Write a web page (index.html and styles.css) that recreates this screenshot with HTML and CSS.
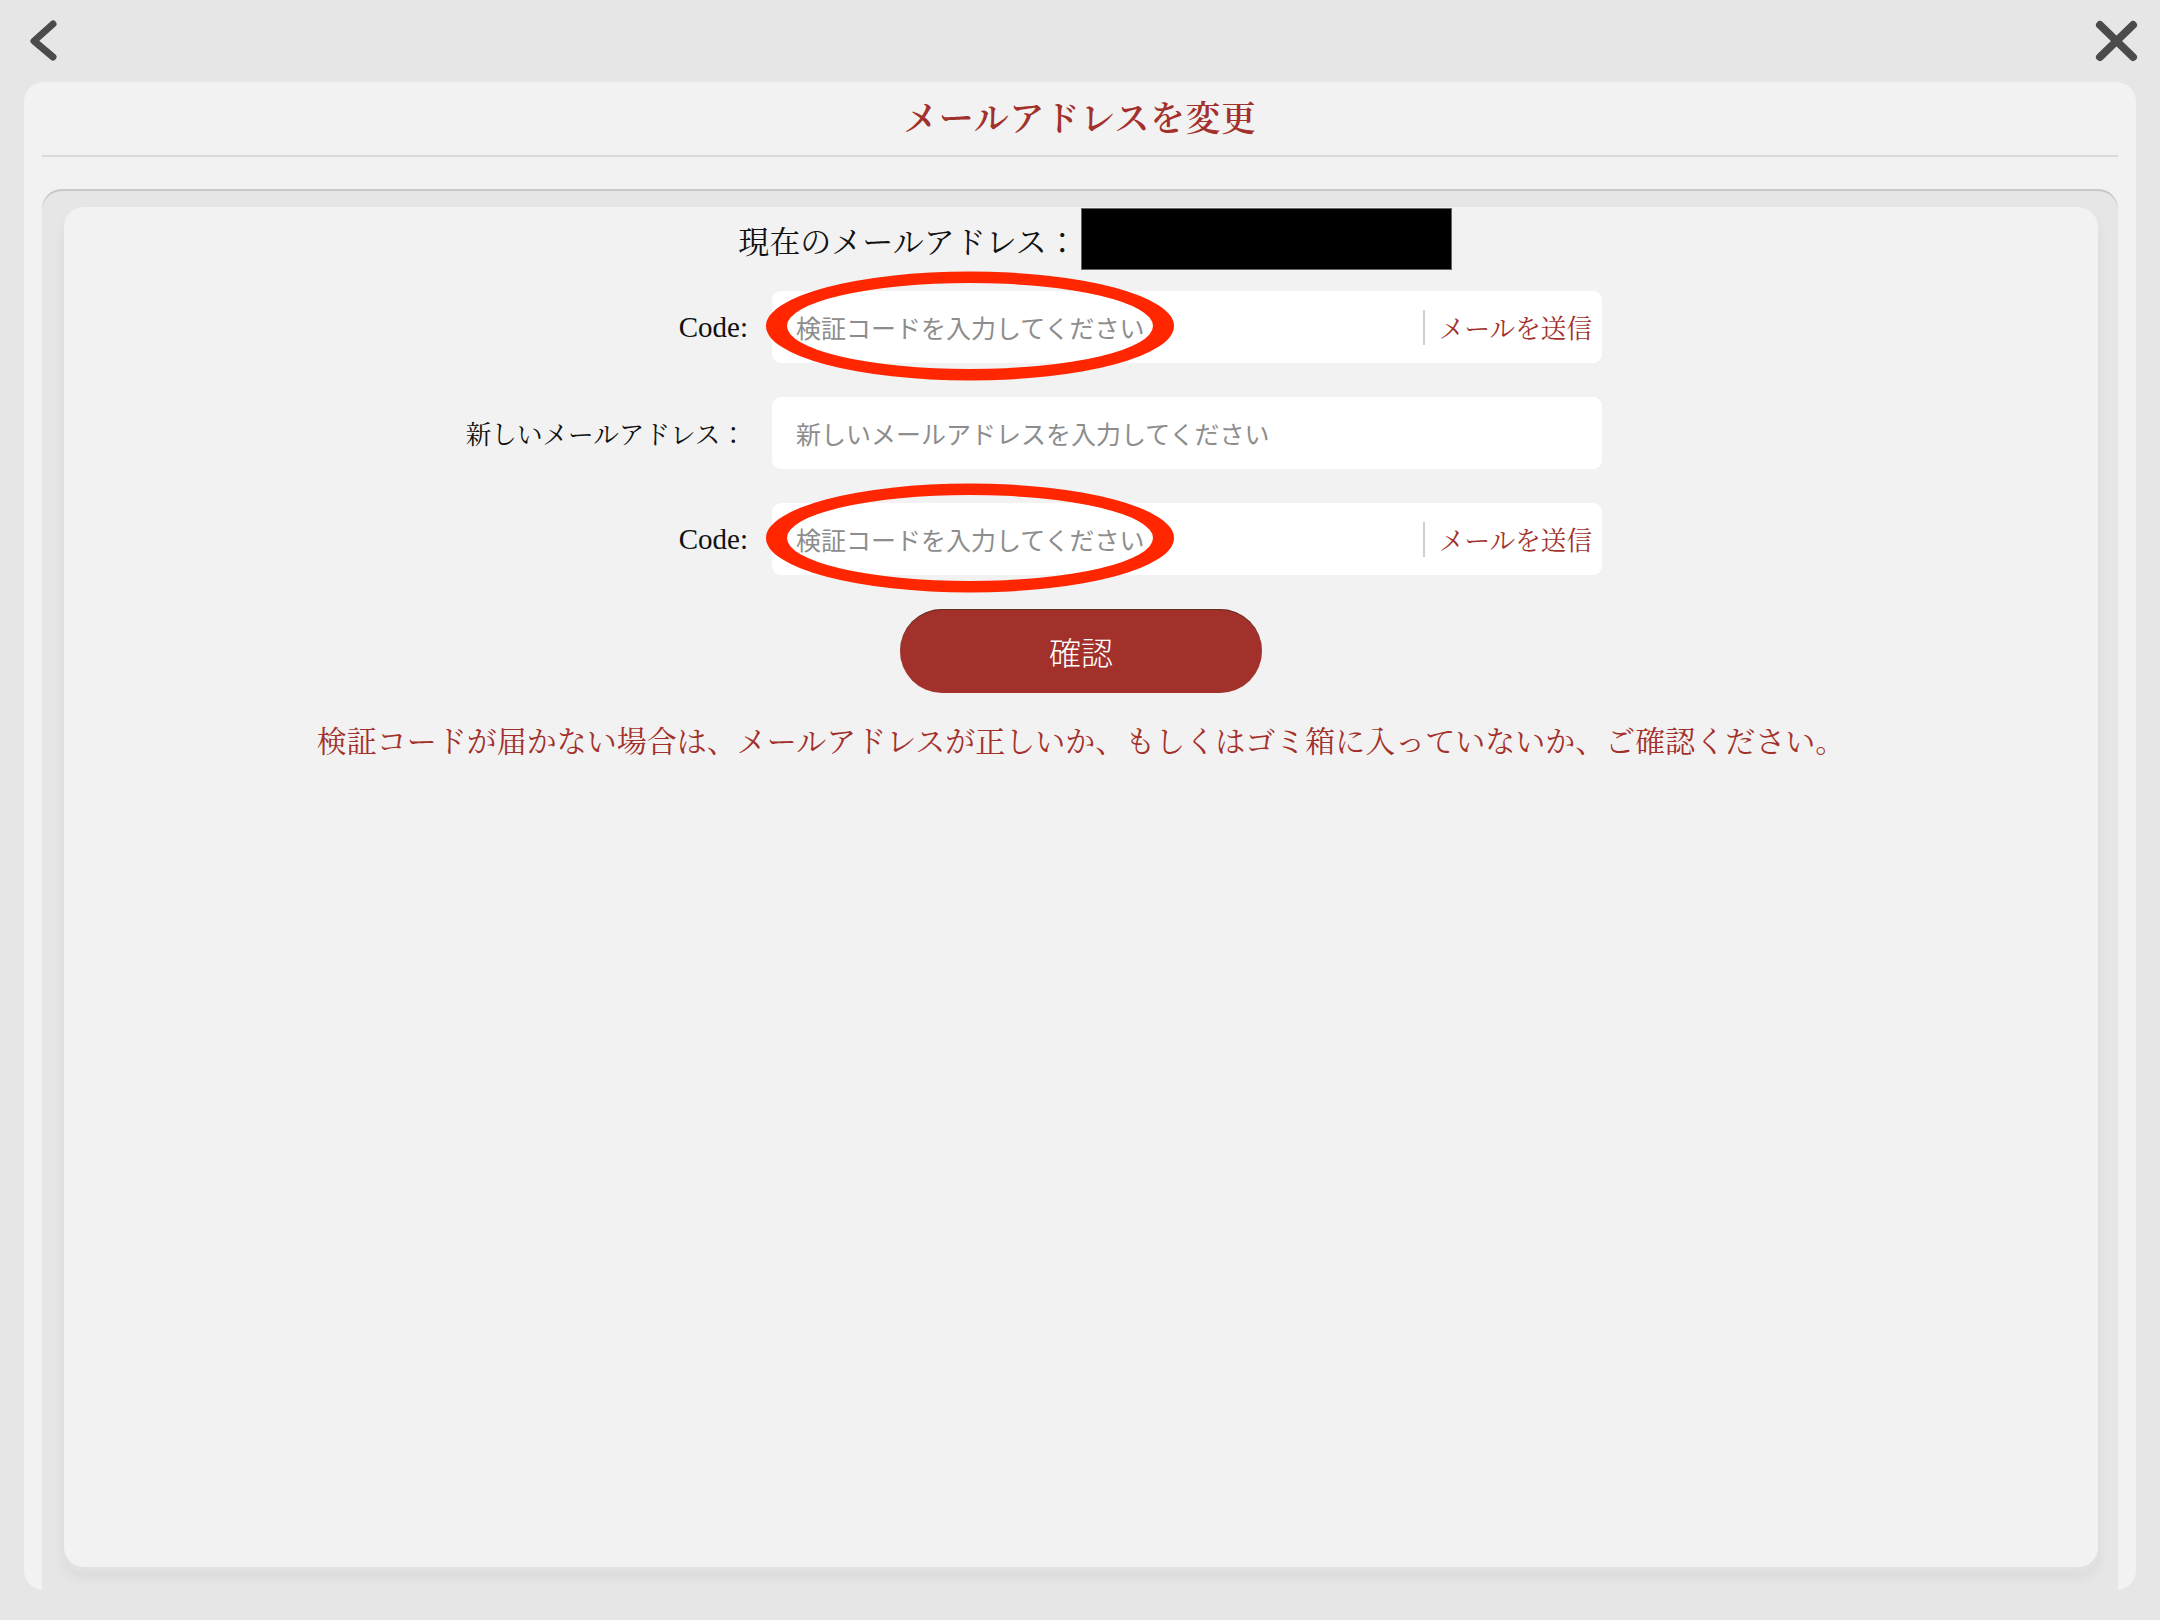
FILE: index.html
```html
<!DOCTYPE html>
<html lang="ja">
<head>
<meta charset="utf-8">
<title>メールアドレスを変更</title>
<link rel="stylesheet" href="styles.css">
</head>
<body>
<div class="page">
  <header class="topbar">
    <button class="icon-btn" aria-label="戻る">
      <svg class="icon-back" viewBox="0 0 32 44" width="32" height="44"><path d="M25 6 L6 23 L25 39"/></svg>
    </button>
    <button class="icon-btn" aria-label="閉じる">
      <svg class="icon-close" viewBox="0 0 48 44" width="48" height="44"><path d="M8 7 L41 39 M41 7 L8 39"/></svg>
    </button>
  </header>

  <main class="panel">
    <div class="panel-head">
      <h1 class="panel-title">メールアドレスを変更</h1>
    </div>

    <section class="frame">
      <div class="card">
        <div class="current">
          <span class="current-label">現在のメールアドレス：</span>
          <span class="current-value"></span>
        </div>

        <div class="form">
          <label class="form-label label-code">Code:</label>
          <div class="field">
            <input class="field-input" type="text" placeholder="検証コードを入力してください">
            <span class="field-sep"></span>
            <button class="send-btn">メールを送信</button>
            <svg class="mark" viewBox="0 0 410 112" width="410" height="112"><path fill-rule="evenodd" d="M1 56 a204 54.5 0 1 0 408 0 a204 54.5 0 1 0 -408 0 Z M22 56 a183 43 0 1 0 366 0 a183 43 0 1 0 -366 0 Z"/></svg>
          </div>

          <label class="form-label label-jp">新しいメールアドレス：</label>
          <div class="field">
            <input class="field-input" type="text" placeholder="新しいメールアドレスを入力してください">
          </div>

          <label class="form-label label-code">Code:</label>
          <div class="field">
            <input class="field-input" type="text" placeholder="検証コードを入力してください">
            <span class="field-sep"></span>
            <button class="send-btn">メールを送信</button>
            <svg class="mark" viewBox="0 0 410 112" width="410" height="112"><path fill-rule="evenodd" d="M1 56 a204 54.5 0 1 0 408 0 a204 54.5 0 1 0 -408 0 Z M22 56 a183 43 0 1 0 366 0 a183 43 0 1 0 -366 0 Z"/></svg>
          </div>
        </div>

        <button class="confirm">確認</button>

        <p class="note">検証コードが届かない場合は、メールアドレスが正しいか、もしくはゴミ箱に入っていないか、ご確認ください。</p>
      </div>
    </section>
  </main>
</div>
</body>
</html>
```

FILE: styles.css
```css
:root {
  --serif: "Liberation Serif", "Noto Serif CJK JP", "Noto Sans CJK JP", serif;
  --sans: "Noto Sans CJK JP", "Noto Sans", sans-serif;
  --brand: #a3312b;
  --bg: #e6e6e6;
  --surface: #f2f2f2;
}

* { box-sizing: border-box; }

html, body {
  margin: 0;
  padding: 0;
  background: var(--bg);
}

.page {
  width: 2160px;
  height: 1620px;
  display: flex;
  flex-direction: column;
}

/* top navigation icons */
.topbar {
  height: 82px;
  flex: none;
  display: flex;
  justify-content: space-between;
  align-items: flex-start;
  padding: 18px 20px 0 28px;
}

.icon-btn {
  border: 0;
  padding: 0;
  margin: 0;
  background: none;
  display: block;
  line-height: 0;
}

.icon-btn svg path {
  fill: none;
  stroke: #4b4b4b;
  stroke-linecap: round;
  stroke-linejoin: round;
}

.icon-back path { stroke-width: 7; }
.icon-close path { stroke-width: 8; }

/* main sheet */
.panel {
  height: 1508px;
  margin: 0 24px;
  padding: 0 18px;
  background: var(--surface);
  border-radius: 20px;
  display: flex;
  flex-direction: column;
}

.panel-head {
  height: 75px;
  flex: none;
  border-bottom: 2px solid #d9d9d9;
  display: flex;
  align-items: center;
  justify-content: center;
  padding-bottom: 6px;
}

.panel-title {
  margin: 0;
  font-family: var(--serif);
  font-weight: 600;
  font-size: 35px;
  letter-spacing: 0.5px;
  color: var(--brand);
}

.frame {
  flex: 1;
  margin-top: 32px;
  padding: 18px 20px 23px 22px;
  background: var(--bg);
  border-radius: 20px 20px 0 0;
  box-shadow: inset 0 2px 0 #c8c8c8;
  display: flex;
}

.card {
  flex: 1;
  background: var(--surface);
  border-radius: 20px;
  box-shadow: 0 6px 0 #e1e1e1, 0 10px 14px rgba(0, 0, 0, 0.06);
  display: flex;
  flex-direction: column;
}

/* current address */
.current {
  margin-top: 1px;
  height: 62px;
  display: flex;
  align-items: center;
  justify-content: center;
  gap: 3px;
  padding-left: 28px;
}

.current-label {
  font-family: var(--serif);
  font-size: 31px;
  color: #111;
}

.current-value {
  width: 371px;
  height: 62px;
  background: #000;
  border: 1px solid #666;
}

/* form rows */
.form {
  margin: 21px 0 0 378px;
  width: 1160px;
  display: grid;
  grid-template-columns: 306px 830px;
  column-gap: 24px;
  row-gap: 34px;
}

.form-label {
  align-self: center;
  text-align: right;
  font-family: var(--serif);
  color: #111;
}

.label-code { font-size: 29px; }
.label-jp { font-size: 25.6px; padding-right: 2px; }

.field {
  position: relative;
  height: 72px;
  background: #fff;
  border-radius: 9px;
  display: flex;
  align-items: center;
  padding: 0 10px 0 24px;
}

.field-input {
  flex: 1;
  min-width: 0;
  height: 100%;
  border: 0;
  outline: none;
  background: transparent;
  padding: 0;
  font-family: var(--sans);
  font-size: 25px;
  color: #333;
}

.field-input::placeholder {
  color: #8d8d8d;
  opacity: 1;
}

.field-sep {
  width: 2px;
  height: 35px;
  background: #cfcfcf;
  margin-right: 14px;
}

.send-btn {
  border: 0;
  padding: 0;
  background: none;
  font-family: var(--serif);
  font-size: 25.6px;
  color: var(--brand);
}

/* red annotation rings over the code inputs */
.mark {
  position: absolute;
  left: -7px;
  top: -21px;
  pointer-events: none;
}

.mark path { fill: #ff2600; }

/* confirm */
.confirm {
  align-self: center;
  margin-top: 34px;
  width: 362px;
  height: 84px;
  border: 0;
  border-radius: 42px;
  background: var(--brand);
  box-shadow: inset 0 1px 0 rgba(70, 45, 25, 0.7);
  color: #fff;
  font-family: var(--sans);
  font-weight: 300;
  font-size: 32px;
}

.note {
  margin: 30px 0 0;
  text-align: center;
  font-family: var(--serif);
  font-size: 30px;
  line-height: 38px;
  color: var(--brand);
}
```
